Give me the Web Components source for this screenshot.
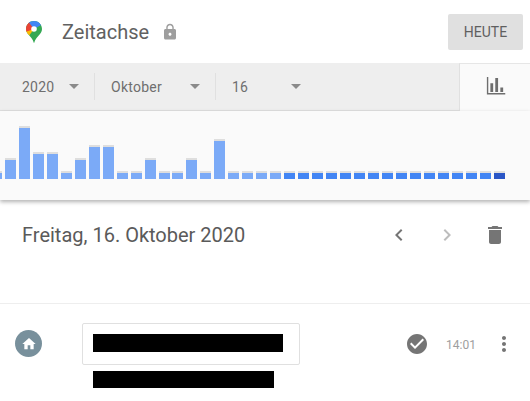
<!DOCTYPE html>
<html lang="de">
<head>
<meta charset="utf-8">
<title>Zeitachse</title>
<style>
html,body{margin:0;padding:0;background:#fff;overflow:hidden}
body{font-family:Roboto,"Liberation Sans",sans-serif;width:530px;height:401px}
</style>
</head>
<body>
<tl-app>
  <tl-header title-text="Zeitachse" action="HEUTE"></tl-header>
  <tl-toolbar>
    <tl-select style="width:94px" label="2020"></tl-select>
    <tl-select style="width:121px" label="Oktober" divided></tl-select>
    <tl-select style="width:101px" label="16" divided></tl-select>
  </tl-toolbar>
  <tl-chart></tl-chart>
  <tl-day-header label="Freitag, 16. Oktober 2020"></tl-day-header>
  <tl-entry time="14:01"></tl-entry>
</tl-app>
<script>
const ICONS={
  lock:'<path d="M18 8h-1V6c0-2.76-2.24-5-5-5S7 3.24 7 6v2H6c-1.1 0-2 .9-2 2v10c0 1.1.9 2 2 2h12c1.1 0 2-.9 2-2V10c0-1.1-.9-2-2-2zm-6 9c-1.1 0-2-.9-2-2s.9-2 2-2 2 .9 2 2-.9 2-2 2zm3.1-9H8.9V6c0-1.71 1.39-3.1 3.1-3.1 1.71 0 3.1 1.39 3.1 3.1v2z"/>',
  left:'<path d="M15.41 7.41L14 6l-6 6 6 6 1.41-1.41L10.83 12z"/>',
  right:'<path d="M10 6L8.59 7.41 13.17 12l-4.58 4.59L10 18l6-6z"/>',
  trash:'<path d="M6 19c0 1.1.9 2 2 2h8c1.1 0 2-.9 2-2V7H6v12zM19 4h-3.5l-1-1h-5l-1 1H5v2h14V4z"/>',
  check:'<path d="M12 2C6.48 2 2 6.48 2 12s4.48 10 10 10 10-4.48 10-10S17.52 2 12 2zm-2 15l-5-5 1.41-1.41L10 14.17l7.59-7.59L19 8l-9 9z"/>',
  home:'<path d="M10 20v-6h4v6h5v-8h3L12 3 2 12h3v8z"/>',
  more:'<path d="M12 8c1.1 0 2-.9 2-2s-.9-2-2-2-2 .9-2 2 .9 2 2 2zm0 2c-1.1 0-2 .9-2 2s.9 2 2 2 2-.9 2-2-.9-2-2-2zm0 6c-1.1 0-2 .9-2 2s.9 2 2 2 2-.9 2-2-.9-2-2-2z"/>',
  chart:'<path d="M1 0h1.600v18.400H22V20H1z"/><path d="M5 7h3.200v10H5zM10.600 1h3.200v16h-3.200zM16.400 12h3.200v5h-3.200z"/>'
};
class Base extends HTMLElement{
  constructor(){super();this.attachShadow({mode:'open'});}
  connectedCallback(){this.shadowRoot.innerHTML=this.render();}
}
class TlIcon extends Base{
  render(){
    const s=this.getAttribute('size')||24,c=this.getAttribute('color')||'#757575';
    return `<style>:host{display:block;width:${s}px;height:${s}px;flex:none}svg{display:block;width:100%;height:100%;fill:${c}}</style>
    <svg viewBox="0 0 24 24">${ICONS[this.getAttribute('name')]}</svg>`;
  }
}
class TlPin extends Base{
  render(){
    return `<style>:host{display:block;width:16px;height:22px;flex:none}svg{display:block}</style>
    <svg width="16" height="22" viewBox="0 0 16 22">
      <defs><clipPath id="p"><path d="M8 0C3.600 0 0 3.500 0 7.900c0 2.200.9 3.700 2 5.200 2.200 2.800 4.900 4.900 5.900 8.900h.2c1-4 3.700-6.100 5.900-8.900 1.100-1.500 2-3 2-5.200C16 3.500 12.400 0 8 0z"/></clipPath></defs>
      <g clip-path="url(#p)">
        <rect width="16" height="22" fill="#34a853"/>
        <polygon points="-1,9 8,8 2,16 -1,16" fill="#fbbc04"/>
        <polygon points="-1,-1 3,-1 8,8 -1,11" fill="#ea4335"/>
        <polygon points="2.500,1 5,-1 17,-1 17,3 8,8" fill="#4285f4"/>
        <circle cx="8" cy="8" r="2.800" fill="#fff"/>
      </g>
    </svg>`;
  }
}
class TlApp extends HTMLElement{
  constructor(){super();this.attachShadow({mode:'open'}).innerHTML=`<style>:host{display:flex;flex-direction:column;width:530px;height:401px;background:#fff;overflow:hidden;font-family:Roboto,"Liberation Sans",sans-serif}</style><slot></slot>`;}
}
class TlHeader extends Base{
  render(){
    return `<style>
    :host{display:flex;align-items:center;height:63px;box-sizing:border-box;padding:0 7px 0 26px;background:#fff;flex:none}
    .t{margin-left:20px;font-size:20px;color:#616161}
    tl-icon{margin-left:12px}
    button{all:unset;box-sizing:border-box;margin-left:auto;width:75px;height:36px;background:#e0e0e0;border-radius:2px;color:#5f5f5f;font:14px Roboto,"Liberation Sans",sans-serif;text-align:center;line-height:36px}
    </style><tl-pin></tl-pin><span class="t">${this.getAttribute('title-text')}</span><tl-icon name="lock" size="18" color="#9e9e9e"></tl-icon><button>${this.getAttribute('action')}</button>`;
  }
}
class TlToolbar extends HTMLElement{
  constructor(){super();this.attachShadow({mode:'open'}).innerHTML=`<style>
    :host{display:flex;height:48px;flex:none;background:#eee;box-sizing:border-box;border-bottom:1px solid #e0e0e0}
    .sel{display:flex;flex:1}
    .tab{width:71px;height:48px;box-sizing:border-box;background:#fafafa;border-left:1px solid #e0e0e0;border-top:1px solid #e6e6e6;display:flex;align-items:center;justify-content:center;padding-left:2px}
    </style><div class="sel"><slot></slot></div><div class="tab"><tl-icon name="chart" size="21" color="#6e6e6e"></tl-icon></div>`;}
}
class TlSelect extends Base{
  render(){
    const d=this.hasAttribute('divided');
    return `<style>
    :host{display:flex;align-items:center;flex:none;box-sizing:border-box;height:27px;margin-top:10px;padding-left:${d?16:22}px;${d?'border-left:1px solid #e0e0e0':''}}
    span{font-size:14px;color:#6f6f6f;letter-spacing:.25px}
    i{display:block;margin-left:auto;margin-right:15px;width:0;height:0;border:5px solid transparent;border-top-color:#8a8a8a;border-bottom:0}
    </style><span>${this.getAttribute('label')}</span><i></i>`;
  }
}
class TlBar extends Base{
  render(){
    const h=+this.getAttribute('h'),c=this.getAttribute('c')||'#7baaf7',w=this.getAttribute('w')||11;
    return `<style>:host{display:block;flex:none;width:${w}px;height:${h}px;background:${c};border-top:2px solid #dedede}</style>`;
  }
}
class TlChart extends Base{
  render(){
    const S=6,heights=[[S,2],[19],[51],[25],[25],[S],[19],[32],[32],[S],[S],[19],[S],[S],[19],[S],[38],[S],[S],[S],[S]];
    let m='';
    heights.forEach((b,i)=>{
      const st=i===13?' style="margin-left:-1px"':'';
      m+=`<tl-bar h="${b[0]}"${b[1]?` w="${b[1]}"`:''}${st}></tl-bar>`;
    });
    for(let i=0;i<16;i++) m+=`<tl-bar h="6" c="${i===15?'#2a56c6':'#4285f4'}"></tl-bar>`;
    return `<style>
    :host{display:flex;align-items:flex-end;gap:3px;flex:none;height:89px;box-sizing:border-box;padding-bottom:21px;background:#fafafa;box-shadow:0 2px 4px rgba(0,0,0,.3);position:relative}
    </style>${m}`;
  }
}
class TlDayHeader extends Base{
  render(){
    return `<style>
    :host{display:flex;align-items:center;height:70px;flex:none;box-sizing:border-box;padding:0 23px 0 22px}
    span{font-size:20px;color:#5a5a5a;margin-right:auto}
    .g{margin-left:24px}
    </style><span>${this.getAttribute('label')}</span><tl-icon name="left"></tl-icon><tl-icon class="g" name="right" color="#bdbdbd"></tl-icon><tl-icon class="g" name="trash"></tl-icon>`;
  }
}
class TlEntry extends Base{
  render(){
    return `<style>
    :host{display:grid;grid-template-columns:82px 218px 1fr;margin-top:33px;border-top:1px solid #eee;padding-top:19px;flex:none}
    .av{width:27px;height:27px;border-radius:50%;background:#78909c;margin:7px 0 0 15px;display:flex;align-items:center;justify-content:center}
    .mid{display:flex;flex-direction:column}
    .card{box-sizing:border-box;height:42px;border:1px solid #e0e0e0;border-radius:2px;padding:10px;}
    .r1{width:190px;height:18px;background:#000}
    .r2{width:181px;height:17px;background:#000;margin:6px 0 0 11px}
    .side{display:flex;align-items:flex-start;padding:9px 0 0 105px;box-sizing:border-box;height:42px}
    time{font-size:12px;color:#9e9e9e;margin:6px 16px 0 17px}
    </style>
    <div class="av"><tl-icon name="home" size="16" color="#fff"></tl-icon></div>
    <div class="mid"><div class="card"><div class="r1"></div></div><div class="r2"></div></div>
    <div class="side"><tl-icon name="check"></tl-icon><time>${this.getAttribute('time')}</time><tl-icon name="more"></tl-icon></div>`;
  }
}
customElements.define('tl-icon',TlIcon);
customElements.define('tl-pin',TlPin);
customElements.define('tl-bar',TlBar);
customElements.define('tl-select',TlSelect);
customElements.define('tl-toolbar',TlToolbar);
customElements.define('tl-header',TlHeader);
customElements.define('tl-chart',TlChart);
customElements.define('tl-day-header',TlDayHeader);
customElements.define('tl-entry',TlEntry);
customElements.define('tl-app',TlApp);
</script>
</body>
</html>
